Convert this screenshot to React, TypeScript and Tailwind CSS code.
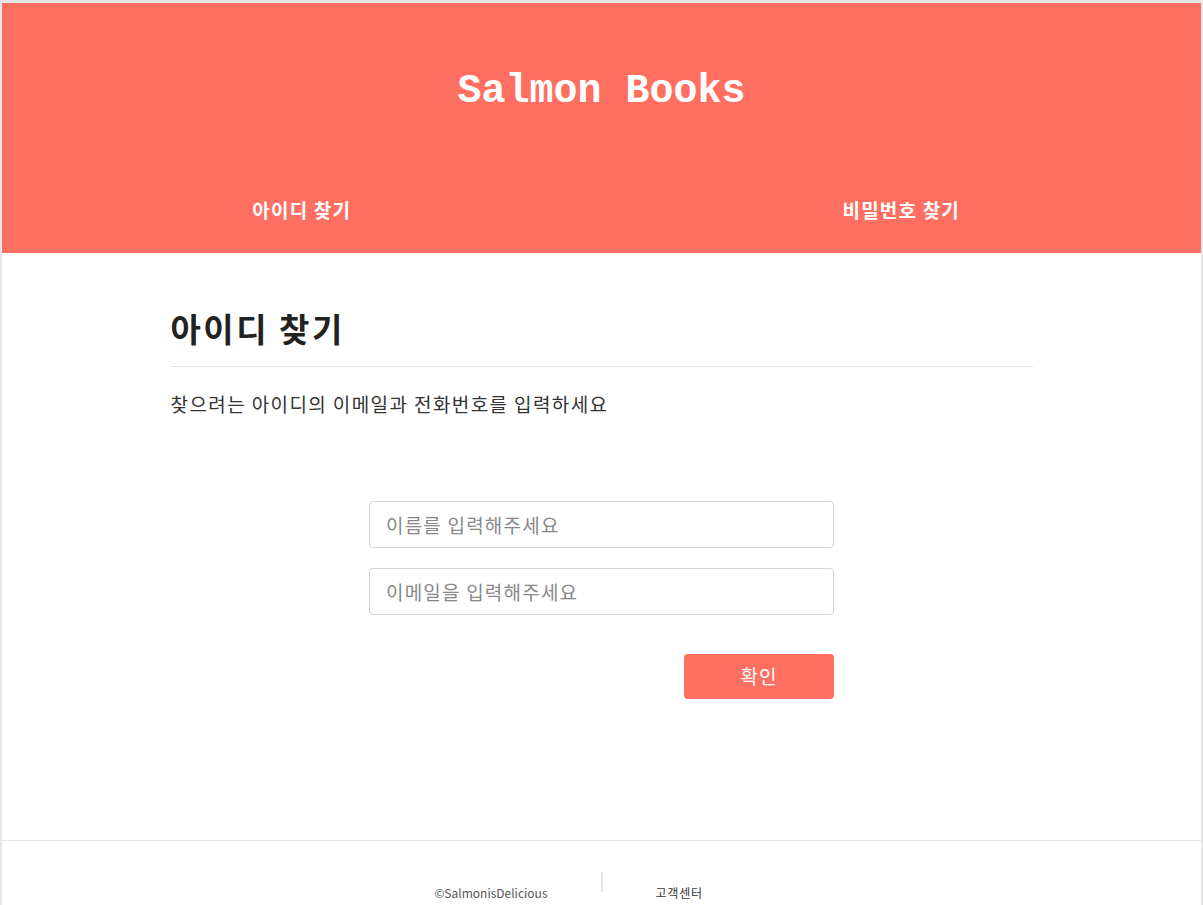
import React, { useState } from 'react'

const kr = "font-['Noto_Sans_CJK_KR','Noto_Sans',sans-serif]"

export default function App() {
  const [form, setForm] = useState({ name: '', email: '' })

  const handleChange = (e: React.ChangeEvent<HTMLInputElement>) => {
    const { name, value } = e.target
    setForm(prev => ({ ...prev, [name]: value }))
  }

  return (
    <div className={`min-h-[905px] bg-[#e6e6e6] pt-[3px] px-[2px] ${kr}`}>
      <div className="bg-white min-h-[902px] flex flex-col">
        {/* header */}
        <header className="bg-[#ff6f61] h-[250px] flex flex-col">
          <div className="h-[170px] flex items-center justify-center pt-[8px]">
            <h1 className="text-white text-[40px] font-bold font-['Liberation_Mono','Courier_New',monospace]">Salmon Books</h1>
          </div>
          <nav className="h-[74px] grid grid-cols-2">
            <a className="flex items-center justify-center text-white text-[19px] font-bold tracking-[1.2px]">아이디 찾기</a>
            <a className="flex items-center justify-center text-white text-[19px] font-bold tracking-[1.2px]">비밀번호 찾기</a>
          </nav>
        </header>

        {/* content */}
        <main className="w-[862px] mx-auto pt-[53px] h-[587px]">
          <h2 className="text-[33px] font-bold text-[#222] leading-[44px] tracking-[2.5px]">아이디 찾기</h2>
          <div className="mt-[16px] border-t border-[#e4e4e4]" />
          <p className="mt-[23px] text-[19px] text-[#333] leading-[28px] tracking-[1.4px]">찾으려는 아이디의 이메일과 전화번호를 입력하세요</p>

          <form className="w-[465px] mx-auto mt-[83px] flex flex-col gap-[20px]" onSubmit={e => e.preventDefault()}>
            <input
              name="name"
              value={form.name}
              onChange={handleChange}
              placeholder="이름를 입력해주세요"
              className="h-[47px] px-[16px] border border-[#d4d4d8] rounded-[4px] text-[19px] tracking-[1.2px] text-[#333] placeholder:text-[#888] outline-none"
            />
            <input
              name="email"
              value={form.email}
              onChange={handleChange}
              placeholder="이메일을 입력해주세요"
              className="h-[47px] px-[16px] border border-[#d4d4d8] rounded-[4px] text-[19px] tracking-[1.2px] text-[#333] placeholder:text-[#888] outline-none"
            />
            <div className="flex justify-end mt-[19px]">
              <button type="submit" className="w-[150px] h-[45px] bg-[#ff6f61] rounded-[4px] text-white text-[19px] tracking-[1px]">확인</button>
            </div>
          </form>
        </main>

        {/* footer */}
        <footer className="border-t border-[#e4e4e4] h-[62px] flex justify-center pt-[31px]">
          <div className="w-[140px] text-right pr-[15px] pt-[12px] text-[12px] text-[#555]">©SalmonisDelicious</div>
          <div className="w-[2px] h-[20px] bg-[#e4e4e4] mx-[38px]" />
          <div className="w-[140px] pl-[15px] pt-[12px] text-[12px] text-[#333] tracking-[0.8px]">고객센터</div>
        </footer>
      </div>
    </div>
  )
}
